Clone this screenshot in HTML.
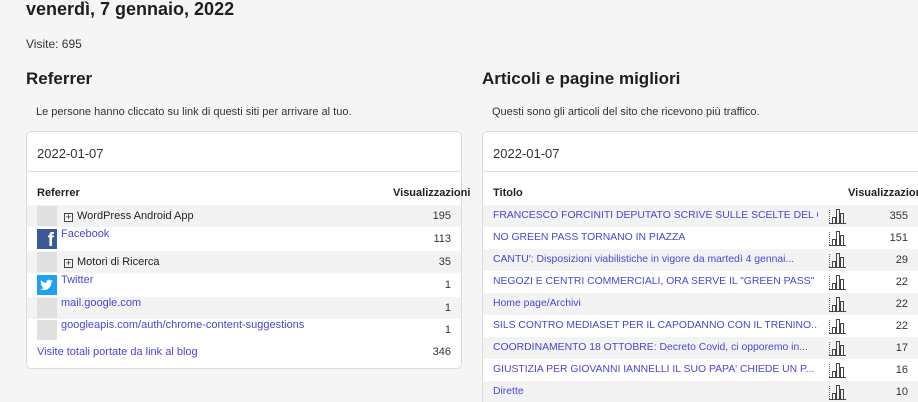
<!DOCTYPE html>
<html><head><meta charset="utf-8"><style>
*{margin:0;padding:0;box-sizing:border-box}
html,body{width:918px;height:402px;overflow:hidden}
body{background:#f5f5f5;font-family:"Liberation Sans",sans-serif;color:#222;position:relative}
.a{position:absolute;white-space:nowrap}
h1{position:absolute;left:26px;top:-1px;font-size:18px;font-weight:bold;color:#1e1e1e}
h2{position:absolute;font-size:17px;font-weight:bold;color:#1e1e1e}
.card{position:absolute;background:#fff;border:1px solid #dcdcdc;border-radius:5px}
.hd{height:40px;border-bottom:1px solid #ddd;font-size:13px;padding:14px 0 0 10px;color:#333}
.row{position:absolute;left:0;height:22px;font-size:11px;line-height:22px}
.g{background:#f3f3f3}
.lk{color:#4747d6}
.n{position:absolute;text-align:right;font-size:11px;color:#333}
.ic{position:absolute;width:20px;height:20px;background:#e0e0e0;top:1px;left:10px}
.bar{position:absolute;left:346px;top:3px}
.th{position:absolute;font-size:11px;font-weight:bold;color:#222}
.plus{display:inline-block;width:9px;height:9px;border:1px solid #444;font-size:9px;line-height:7px;text-align:center;margin-right:4px;vertical-align:-1px}
.t{font-size:10.4px;overflow:hidden;max-width:325px}
</style></head><body>
<h1>venerdì, 7 gennaio, 2022</h1>
<div class="a" style="left:26px;top:37px;font-size:12px;color:#333">Visite: 695</div>
<h2 style="left:26px;top:69px">Referrer</h2>
<h2 style="left:482px;top:69px">Articoli e pagine migliori</h2>
<div class="a" style="left:36px;top:106px;font-size:11px;color:#333">Le persone hanno cliccato su link di questi siti per arrivare al tuo.</div>
<div class="a" style="left:492px;top:106px;font-size:11px;color:#333">Questi sono gli articoli del sito che ricevono più traffico.</div>

<div class="card" style="left:26px;top:131px;width:436px;height:238px">
<div class="hd">2022-01-07</div>
<div class="th" style="left:10px;top:55px">Referrer</div>
<div class="th" style="left:366px;top:55px">Visualizzazioni</div>
<div class="row g" style="top:73px;width:434px"><div class="ic"></div><span class="a" style="left:37px"><span class="plus">+</span>WordPress Android App</span><span class="n" style="right:10px;top:0">195</span></div>
<div class="row" style="top:96px;width:434px"><div class="ic" style="background:#3b5998;color:#fff;font-weight:bold;font-size:19px;line-height:24px;text-align:right;padding-right:3px">f</div><span class="a lk" style="left:34px;top:-5px">Facebook</span><span class="n" style="right:10px;top:0">113</span></div>
<div class="row g" style="top:119px;width:434px"><div class="ic"></div><span class="a" style="left:37px"><span class="plus">+</span>Motori di Ricerca</span><span class="n" style="right:10px;top:0">35</span></div>
<div class="row" style="top:142px;width:434px"><div class="ic" style="background:#1da1f2"><svg width="20" height="20" viewBox="0 0 20 20"><path d="M16 6c-.5.2-1 .4-1.5.4.6-.3 1-.9 1.2-1.5-.5.3-1.1.5-1.7.7a2.6 2.6 0 0 0-4.5 2.4C7.3 7.9 5.4 6.9 4.1 5.3c-.7 1.2-.3 2.7.8 3.5-.4 0-.8-.1-1.2-.3 0 1.3.9 2.4 2.1 2.6-.4.1-.8.1-1.2 0 .3 1.1 1.3 1.8 2.4 1.8A5.3 5.3 0 0 1 3 14c1.2.7 2.5 1.1 4 1.1 4.8 0 7.5-4 7.3-7.6.5-.4 1-.9 1.3-1.4z" fill="#fff"/></svg></div><span class="a lk" style="left:34px;top:-5px">Twitter</span><span class="n" style="right:10px;top:0">1</span></div>
<div class="row g" style="top:165px;width:434px"><div class="ic"></div><span class="a lk" style="left:34px;top:-5px">mail.google.com</span><span class="n" style="right:10px;top:0">1</span></div>
<div class="row" style="top:187px;width:434px"><div class="ic"></div><span class="a lk" style="left:34px;top:-5px">googleapis.com/auth/chrome-content-suggestions</span><span class="n" style="right:10px;top:0">1</span></div>
<div class="row" style="top:209px;width:434px"><span class="a lk" style="left:10px">Visite totali portate da link al blog</span><span class="n" style="right:10px;top:0">346</span></div>
</div>

<div class="card" style="left:482px;top:131px;width:445px;height:290px">
<div class="hd">2022-01-07</div>
<div class="th" style="left:10px;top:55px">Titolo</div>
<div class="th" style="left:365px;top:55px">Visualizzazioni</div>
<div id="rows"></div>
</div>
<script>
var d=[["FRANCESCO FORCINITI DEPUTATO SCRIVE SULLE SCELTE DEL G...",355],["NO GREEN PASS TORNANO IN PIAZZA",151],["CANTU': Disposizioni viabilistiche in vigore da martedì 4 gennai...",29],["NEGOZI E CENTRI COMMERCIALI, ORA SERVE IL \"GREEN PASS\"",22],["Home page/Archivi",22],["SILS CONTRO MEDIASET PER IL CAPODANNO CON IL TRENINO...",22],["COORDINAMENTO 18 OTTOBRE: Decreto Covid, ci opporemo in...",17],["GIUSTIZIA PER GIOVANNI IANNELLI IL SUO PAPA' CHIEDE UN P...",16],["Dirette",10]];
var ic='<svg class="bar" width="17" height="16" viewBox="0 0 17 16"><path d="M0.5 2v13" stroke="#666" stroke-dasharray="1 1"/><path d="M0 15.5h17" stroke="#444"/><rect x="3.5" y="9.5" width="3" height="6" fill="none" stroke="#444"/><rect x="7.5" y="1.5" width="3" height="14" fill="none" stroke="#444"/><rect x="11.5" y="5.5" width="3" height="10" fill="none" stroke="#444"/></svg>';
var h="";d.forEach(function(r,i){h+='<div class="row'+(i%2==0?' g':'')+'" style="top:'+(73+i*22)+'px;width:443px"><span class="a lk t" style="left:10px">'+r[0]+'</span>'+ic+'<span class="n" style="left:380px;width:45px;top:0">'+r[1]+'</span></div>'});
document.getElementById("rows").innerHTML=h;
</script>
</body></html>
